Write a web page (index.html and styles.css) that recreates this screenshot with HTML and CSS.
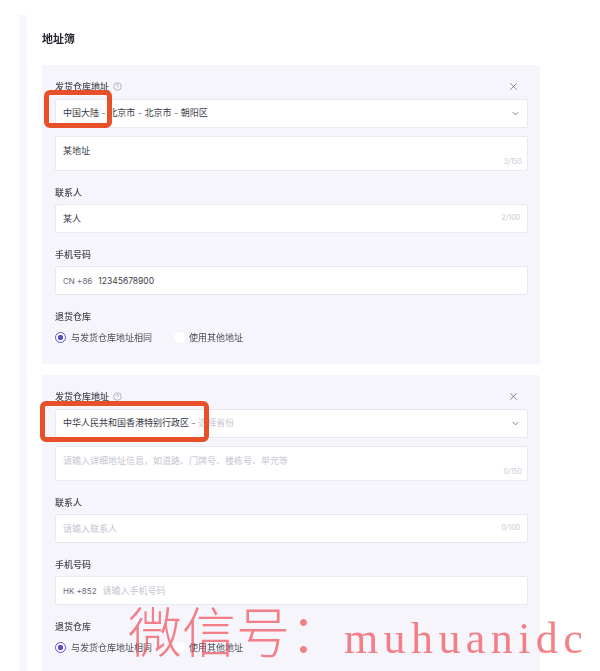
FILE: index.html
```html
<!DOCTYPE html>
<html lang="zh-CN">
<head>
<meta charset="utf-8">
<title>地址簿</title>
<link rel="stylesheet" href="styles.css">
</head>
<body>
<div class="page">
  <div class="rail"></div>
  <main class="content">
    <h2 class="title">地址簿</h2>

    <section class="card">
      <div class="head">
        <span class="label">发货仓库地址</span>
        <svg class="help" viewBox="0 0 10 10"><circle cx="5" cy="5" r="4.2"/><path d="M3.8 4a1.2 1.2 0 1 1 1.7 1.1c-.4.2-.5.4-.5.8M5 7.2v.2"/></svg>
        <svg class="close" viewBox="0 0 10 10"><path d="M1.5 1.5l7 7M8.5 1.5l-7 7"/></svg>
      </div>
      <div class="field select">
        <span class="callout short"></span>
        <span class="value">中国大陆 <i>-</i> 北京市 <i>-</i> 北京市 <i>-</i> 朝阳区</span>
        <svg class="chev" viewBox="0 0 10 10"><path d="M2 3.5L5 6.5L8 3.5"/></svg>
      </div>
      <div class="field area">
        <span class="value">某地址</span>
        <span class="count">3/150</span>
      </div>
      <div class="label gap-label">联系人</div>
      <div class="field">
        <span class="value">某人</span>
        <span class="count mid">2/100</span>
      </div>
      <div class="label gap-label">手机号码</div>
      <div class="field">
        <span class="prefix">CN +86</span>
        <span class="value num">12345678900</span>
      </div>
      <div class="label gap-label">退货仓库</div>
      <div class="radios">
        <span class="radio on"></span><span class="rtext">与发货仓库地址相同</span>
        <span class="radio"></span><span class="rtext">使用其他地址</span>
      </div>
    </section>

    <section class="card">
      <div class="head">
        <span class="label">发货仓库地址</span>
        <svg class="help" viewBox="0 0 10 10"><circle cx="5" cy="5" r="4.2"/><path d="M3.8 4a1.2 1.2 0 1 1 1.7 1.1c-.4.2-.5.4-.5.8M5 7.2v.2"/></svg>
        <svg class="close" viewBox="0 0 10 10"><path d="M1.5 1.5l7 7M8.5 1.5l-7 7"/></svg>
      </div>
      <div class="field select">
        <span class="callout long"></span>
        <span class="value">中华人民共和国香港特别行政区 <i>-</i> <span class="ph">选择省份</span></span>
        <svg class="chev" viewBox="0 0 10 10"><path d="M2 3.5L5 6.5L8 3.5"/></svg>
      </div>
      <div class="field area">
        <span class="ph">请输入详细地址信息，如道路、门牌号、楼栋号、单元等</span>
        <span class="count">0/150</span>
      </div>
      <div class="label gap-label">联系人</div>
      <div class="field">
        <span class="ph">请输入联系人</span>
        <span class="count mid">0/100</span>
      </div>
      <div class="label gap-label">手机号码</div>
      <div class="field">
        <span class="prefix">HK +852</span>
        <span class="ph">请输入手机号码</span>
      </div>
      <div class="label gap-label">退货仓库</div>
      <div class="radios">
        <span class="radio on"></span><span class="rtext">与发货仓库地址相同</span>
        <span class="radio"></span><span class="rtext">使用其他地址</span>
      </div>
    </section>
  </main>
</div>
<div class="watermark"><span>微信号：</span><span class="wm-latin">muhuanidc</span></div>
</body>
</html>
```
FILE: styles.css
```css
* { box-sizing: border-box; }
html, body { margin: 0; height: 671px; overflow: hidden; background: #fff; }
body { font-family: Inter, "Noto Sans CJK SC", sans-serif; color: #2b2b3a; position: relative; }
.page { display: flex; padding: 15px 0 0 19px; filter: blur(.35px); }
.rail { width: 8px; height: 700px; background: #f7f7fb; flex: none; }
.content { padding: 17px 0 0 15px; width: 513px; }
.title { margin: 0 0 19px; font-size: 11px; line-height: 14px; font-weight: 700; color: #23232f; }
.card { background: #f5f5fb; border-radius: 3px; padding: 15px 12px 16px 13px; height: 299px; margin-bottom: 11px; }
.head { display: flex; align-items: center; height: 13px; gap: 3.5px; margin-bottom: 6px; }
.label { font-size: 9px; line-height: 13px; color: #454553; font-weight: 500; }
.help { width: 9px; height: 9px; fill: none; stroke: #8f8f9c; stroke-width: .7; }
.close { width: 9px; height: 9px; margin-left: auto; margin-right: 10px; fill: none; stroke: #70707c; stroke-width: .9; }
.field { position: relative; display: flex; align-items: center; height: 29px; background: #fff; border: 1px solid #e8e8f0; border-radius: 2px; padding: 0 7px; font-size: 9px; }
.select { margin-bottom: 8px; }
.select .value { margin-bottom: 2px; }
.area { height: 35px; align-items: flex-start; padding-top: 8px; margin-bottom: 1px; }
.value { color: #3a3a47; line-height: 12px; white-space: pre; }
.value i { font-style: normal; color: #77778a; }
.num { color: #3d3d4a; font-size: 8.5px; }
.prefix { color: #6a6a78; font-size: 8px; margin-right: 6px; }
.ph { color: #c5c5d0; line-height: 12px; }
.count { position: absolute; right: 5px; bottom: 4px; color: #c9c9d2; font-size: 7px; line-height: 9px; }
.count.mid { right: 7px; bottom: auto; top: 8px; }
.gap-label { margin-top: 15px; margin-bottom: 5px; }
.radios { display: flex; align-items: center; height: 14px; margin-top: 7px; font-size: 9px; color: #4a4a58; }
.radio { width: 11px; height: 11px; border-radius: 50%; background: #fff; flex: none; }
.radio.on { border: 1px solid #5a4fd0; background: radial-gradient(circle, #5a4fd0 0 2.5px, #fff 3px); }
.rtext { margin-left: 5px; margin-right: 22px; }
.radio + .rtext + .radio + .rtext { margin-left: 4px; }
.callout { position: absolute; border: 5px solid #e8502a; border-radius: 6px; pointer-events: none; z-index: 2; }
.callout.short { left: -12px; top: -10px; width: 68px; height: 38px; }
.callout.long { left: -16px; top: -9px; width: 169px; height: 41px; }
.chev { width: 9px; height: 9px; margin-left: auto; fill: none; stroke: #70707c; stroke-width: 1; }
.watermark { position: absolute; left: 128px; top: 598px; display: flex; align-items: baseline; font-family: "Noto Sans CJK SC", sans-serif; font-weight: 300; font-size: 54px; line-height: 64px; color: rgba(240, 70, 80, .68); white-space: nowrap; z-index: 3; }
.wm-latin { font-family: "Liberation Serif", serif; font-weight: 400; font-size: 44px; letter-spacing: 5.4px; }
```
